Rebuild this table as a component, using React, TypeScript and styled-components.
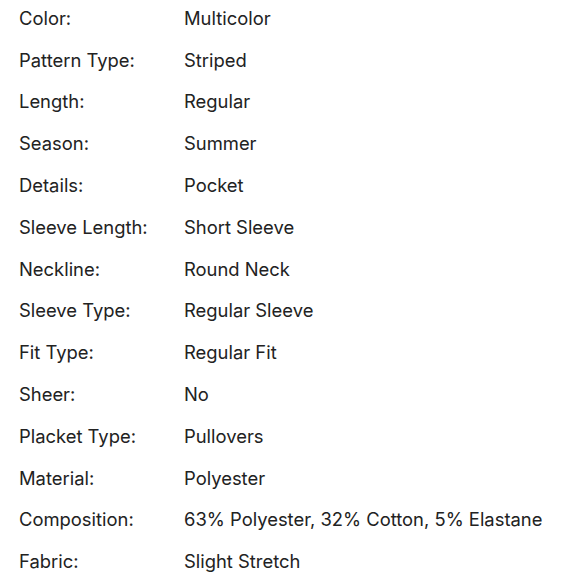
import React from 'react'
import styled, { createGlobalStyle } from 'styled-components'

const specs: [string, string][] = [
  ['Color:', 'Multicolor'],
  ['Pattern Type:', 'Striped'],
  ['Length:', 'Regular'],
  ['Season:', 'Summer'],
  ['Details:', 'Pocket'],
  ['Sleeve Length:', 'Short Sleeve'],
  ['Neckline:', 'Round Neck'],
  ['Sleeve Type:', 'Regular Sleeve'],
  ['Fit Type:', 'Regular Fit'],
  ['Sheer:', 'No'],
  ['Placket Type:', 'Pullovers'],
  ['Material:', 'Polyester'],
  ['Composition:', '63% Polyester, 32% Cotton, 5% Elastane'],
  ['Fabric:', 'Slight Stretch'],
]

const GlobalStyle = createGlobalStyle`
  body {
    margin: 0;
    background: #ffffff;
    font-family: Inter, "Liberation Sans", sans-serif;
  }
`

const SpecList = styled.dl`
  display: grid;
  grid-template-columns: 165px 1fr;
  grid-auto-rows: 41.8px;
  margin: 0;
  padding: 0 0 0 19px;
  margin-top: -3px;
  color: #222222;
  font-size: 18.4px;
`

const Label = styled.dt`
  display: flex;
  align-items: center;
  margin: 0;
`

const Value = styled.dd`
  display: flex;
  align-items: center;
  margin: 0;
`

const App = () => {
  return (
    <>
      <GlobalStyle />
      <SpecList>
        {specs.map(([label, value]) => (
          <React.Fragment key={label}>
            <Label>{label}</Label>
            <Value>{value}</Value>
          </React.Fragment>
        ))}
      </SpecList>
    </>
  )
}

export default App
